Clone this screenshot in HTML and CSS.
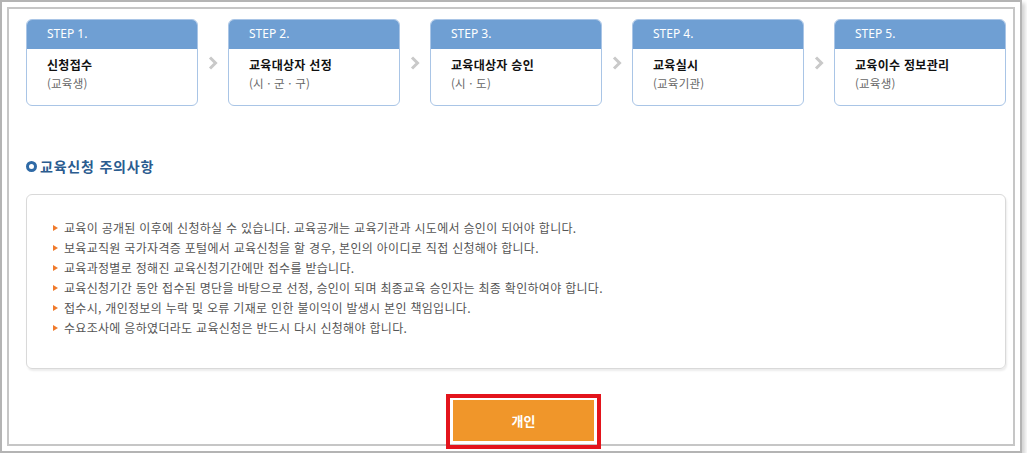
FILE: index.html
```html
<!DOCTYPE html>
<html lang="ko">
<head>
<meta charset="utf-8">
<link rel="stylesheet" href="styles.css">
</head>
<body>
<div class="frame">
  <div class="inner">
    <div class="steps">
      <div class="step">
        <div class="step-head">STEP 1.</div>
        <div class="step-body"><div class="step-title">신청접수</div><div class="step-sub">(교육생)</div></div>
      </div>
      <div class="arrow"><svg width="10" height="14" viewBox="0 0 10 14"><polyline points="2,1.5 7.5,7 2,12.5" fill="none" stroke="#c9c9c9" stroke-width="3"/></svg></div>
      <div class="step">
        <div class="step-head">STEP 2.</div>
        <div class="step-body"><div class="step-title">교육대상자 선정</div><div class="step-sub">(시 · 군 · 구)</div></div>
      </div>
      <div class="arrow"><svg width="10" height="14" viewBox="0 0 10 14"><polyline points="2,1.5 7.5,7 2,12.5" fill="none" stroke="#c9c9c9" stroke-width="3"/></svg></div>
      <div class="step">
        <div class="step-head">STEP 3.</div>
        <div class="step-body"><div class="step-title">교육대상자 승인</div><div class="step-sub">(시 · 도)</div></div>
      </div>
      <div class="arrow"><svg width="10" height="14" viewBox="0 0 10 14"><polyline points="2,1.5 7.5,7 2,12.5" fill="none" stroke="#c9c9c9" stroke-width="3"/></svg></div>
      <div class="step">
        <div class="step-head">STEP 4.</div>
        <div class="step-body"><div class="step-title">교육실시</div><div class="step-sub">(교육기관)</div></div>
      </div>
      <div class="arrow"><svg width="10" height="14" viewBox="0 0 10 14"><polyline points="2,1.5 7.5,7 2,12.5" fill="none" stroke="#c9c9c9" stroke-width="3"/></svg></div>
      <div class="step">
        <div class="step-head">STEP 5.</div>
        <div class="step-body"><div class="step-title">교육이수 정보관리</div><div class="step-sub">(교육생)</div></div>
      </div>
    </div>

    <h2 class="heading"><span class="ring"></span>교육신청 주의사항</h2>

    <div class="notice">
      <ul class="notice-list">
        <li>교육이 공개된 이후에 신청하실 수 있습니다. 교육공개는 교육기관과 시도에서 승인이 되어야 합니다.</li>
        <li>보육교직원 국가자격증 포털에서 교육신청을 할 경우, 본인의 아이디로 직접 신청해야 합니다.</li>
        <li>교육과정별로 정해진 교육신청기간에만 접수를 받습니다.</li>
        <li>교육신청기간 동안 접수된 명단을 바탕으로 선정, 승인이 되며 최종교육 승인자는 최종 확인하여야 합니다.</li>
        <li>접수시, 개인정보의 누락 및 오류 기재로 인한 불이익이 발생시 본인 책임입니다.</li>
        <li>수요조사에 응하였더라도 교육신청은 반드시 다시 신청해야 합니다.</li>
      </ul>
    </div>

    <div class="btn-row">
      <div class="btn-wrap">
        <button class="btn" type="button">개인</button>
        <span class="highlight"></span>
      </div>
    </div>
  </div>
</div>
</body>
</html>
```

FILE: styles.css
```css
* { box-sizing: border-box; }
html, body { margin: 0; padding: 0; background: #fff; }
body {
  font-family: "Noto Sans CJK KR", "Noto Sans", sans-serif;
  color: #333;
}
.frame {
  width: 1022px;
  height: 453px;
  border: 2px solid #b4b4b4;
  padding: 5px;
  box-shadow: 3px 3px 4px rgba(0,0,0,0.18);
  background: #fff;
}
.inner {
  height: 100%;
  border: 2px solid #c6c6c6;
  padding: 10px 0 0 17px;
}
.steps {
  display: flex;
  align-items: flex-start;
}
.step {
  width: 172px;
  height: 87px;
  border: 1px solid #a9c5e6;
  border-radius: 6px;
  overflow: hidden;
  background: #fff;
}
.step-head {
  height: 29px;
  background: #6f9fd3;
  color: #fff;
  font-family: "Noto Sans", sans-serif;
  font-size: 12px;
  line-height: 28px;
  padding-left: 20px;
}
.step-body {
  padding: 6px 0 0 20px;
}
.step-title {
  font-size: 12px;
  letter-spacing: 0.3px;
  font-weight: bold;
  color: #111;
  line-height: 19px;
}
.step-sub {
  font-size: 11.5px;
  letter-spacing: 0.2px;
  color: #666;
  line-height: 19px;
}
.arrow {
  width: 30px;
  height: 87px;
  display: flex;
  align-items: center;
  justify-content: center;
  padding-top: 1px;
}
.heading {
  margin: 50px 0 0 0;
  height: 20px;
  display: flex;
  align-items: center;
  font-size: 14px;
  letter-spacing: 0.8px;
  font-weight: bold;
  color: #2b5c8f;
  line-height: 20px;
}
.ring {
  width: 11px;
  height: 11px;
  border: 3px solid #2f6aa6;
  border-radius: 50%;
  margin-right: 3px;
  margin-top: 1px;
}
.notice {
  margin-top: 18px;
  width: 980px;
  height: 175px;
  border: 1px solid #d9d9d9;
  border-radius: 6px;
  box-shadow: 1px 2px 2px rgba(0,0,0,0.08);
  padding: 23px 0 0 26px;
}
.notice-list {
  list-style: none;
  margin: 0;
  padding: 0;
}
.notice-list li {
  display: flex;
  align-items: center;
  font-size: 12px;
  letter-spacing: 0.3px;
  line-height: 20px;
  color: #555;
}
.notice-list li::before {
  content: "";
  width: 0;
  height: 0;
  border-left: 5px solid #f07a2c;
  border-top: 3.5px solid transparent;
  border-bottom: 3.5px solid transparent;
  margin-right: 6px;
}
.btn-row {
  margin-top: 31px;
  padding-left: 427px;
}
.btn-wrap {
  position: relative;
  width: 141px;
  height: 41px;
}
.btn {
  width: 141px;
  height: 41px;
  border: 0;
  background: #f0962a;
  color: #fff;
  font-family: "Noto Sans CJK KR", sans-serif;
  font-size: 13px;
  font-weight: bold;
  padding: 0;
  display: block;
}
.highlight {
  position: absolute;
  left: -7px;
  right: -7px;
  top: -6px;
  bottom: -8px;
  border: 4px solid #e3141c;
}
```
